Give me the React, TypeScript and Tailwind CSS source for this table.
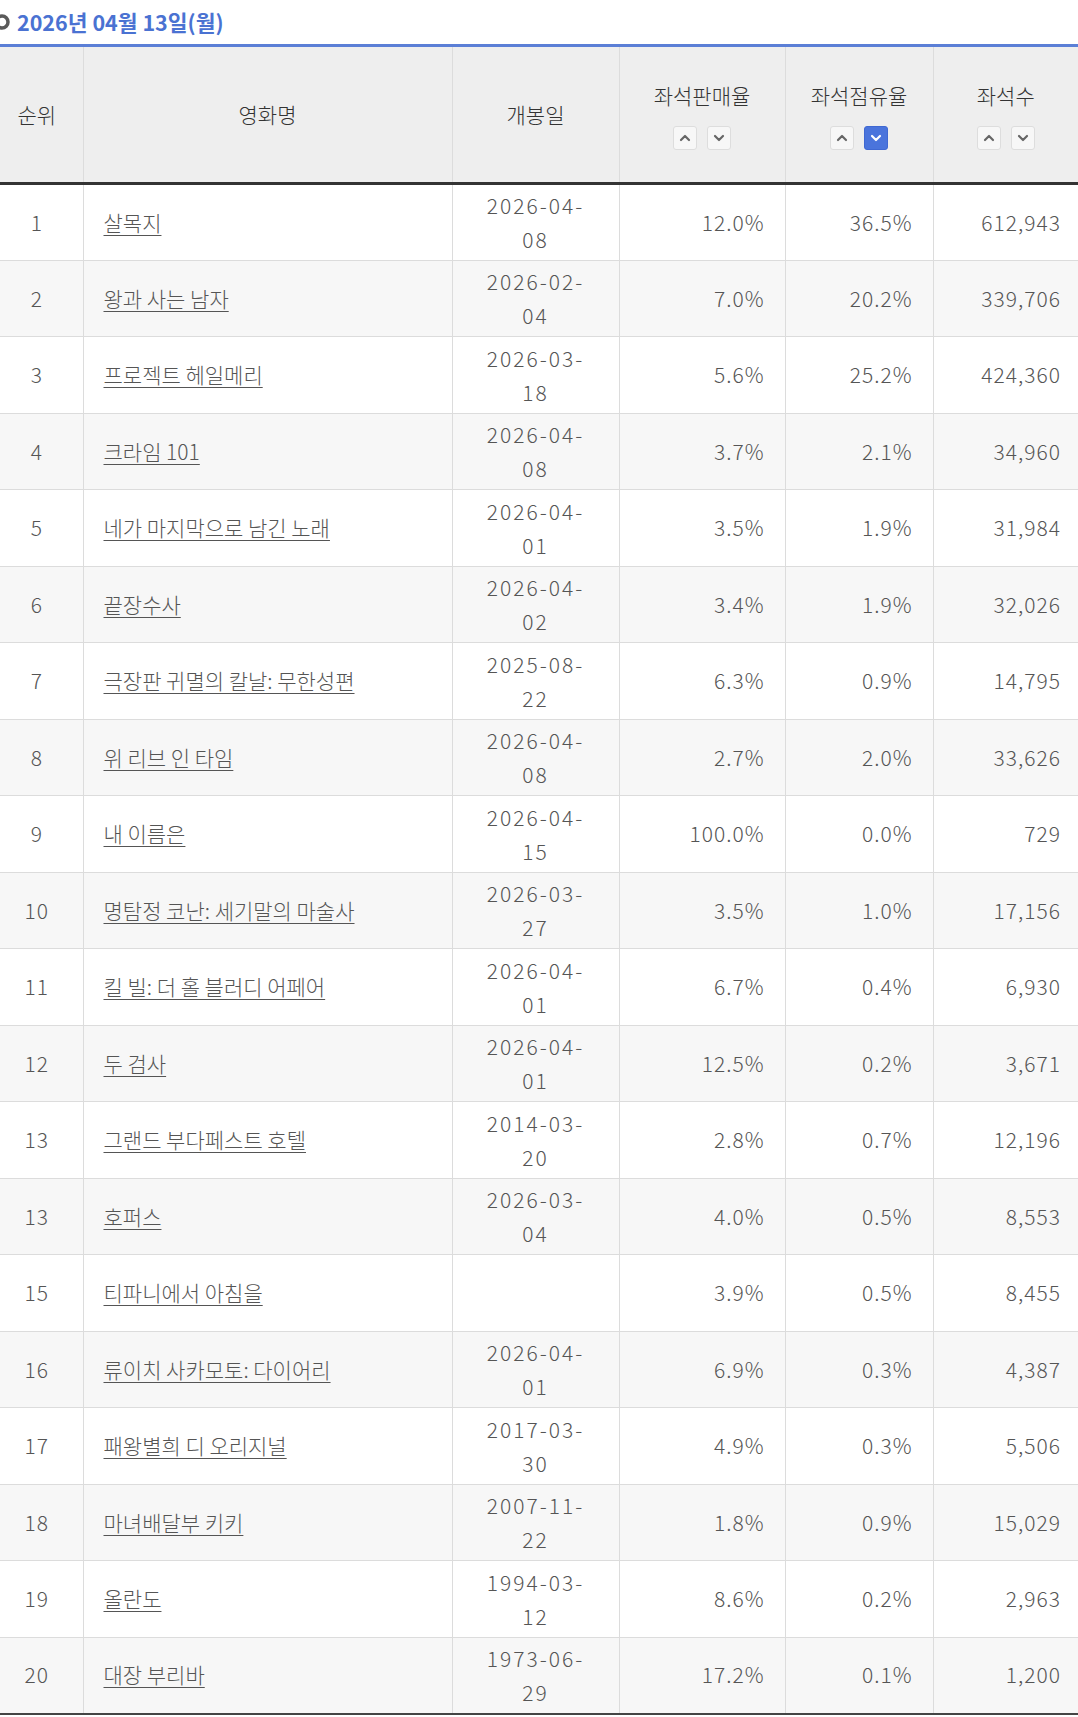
import React from 'react';

const rows = [
  { rank: '1', title: '살목지', date: '2026-04-08', sales: '12.0%', share: '36.5%', seats: '612,943' },
  { rank: '2', title: '왕과 사는 남자', date: '2026-02-04', sales: '7.0%', share: '20.2%', seats: '339,706' },
  { rank: '3', title: '프로젝트 헤일메리', date: '2026-03-18', sales: '5.6%', share: '25.2%', seats: '424,360' },
  { rank: '4', title: '크라임 101', date: '2026-04-08', sales: '3.7%', share: '2.1%', seats: '34,960' },
  { rank: '5', title: '네가 마지막으로 남긴 노래', date: '2026-04-01', sales: '3.5%', share: '1.9%', seats: '31,984' },
  { rank: '6', title: '끝장수사', date: '2026-04-02', sales: '3.4%', share: '1.9%', seats: '32,026' },
  { rank: '7', title: '극장판 귀멸의 칼날: 무한성편', date: '2025-08-22', sales: '6.3%', share: '0.9%', seats: '14,795' },
  { rank: '8', title: '위 리브 인 타임', date: '2026-04-08', sales: '2.7%', share: '2.0%', seats: '33,626' },
  { rank: '9', title: '내 이름은', date: '2026-04-15', sales: '100.0%', share: '0.0%', seats: '729' },
  { rank: '10', title: '명탐정 코난: 세기말의 마술사', date: '2026-03-27', sales: '3.5%', share: '1.0%', seats: '17,156' },
  { rank: '11', title: '킬 빌: 더 홀 블러디 어페어', date: '2026-04-01', sales: '6.7%', share: '0.4%', seats: '6,930' },
  { rank: '12', title: '두 검사', date: '2026-04-01', sales: '12.5%', share: '0.2%', seats: '3,671' },
  { rank: '13', title: '그랜드 부다페스트 호텔', date: '2014-03-20', sales: '2.8%', share: '0.7%', seats: '12,196' },
  { rank: '13', title: '호퍼스', date: '2026-03-04', sales: '4.0%', share: '0.5%', seats: '8,553' },
  { rank: '15', title: '티파니에서 아침을', date: '', sales: '3.9%', share: '0.5%', seats: '8,455' },
  { rank: '16', title: '류이치 사카모토: 다이어리', date: '2026-04-01', sales: '6.9%', share: '0.3%', seats: '4,387' },
  { rank: '17', title: '패왕별희 디 오리지널', date: '2017-03-30', sales: '4.9%', share: '0.3%', seats: '5,506' },
  { rank: '18', title: '마녀배달부 키키', date: '2007-11-22', sales: '1.8%', share: '0.9%', seats: '15,029' },
  { rank: '19', title: '올란도', date: '1994-03-12', sales: '8.6%', share: '0.2%', seats: '2,963' },
  { rank: '20', title: '대장 부리바', date: '1973-06-29', sales: '17.2%', share: '0.1%', seats: '1,200' },
];

const Chevron = ({ down, active }: { down?: boolean; active?: boolean }) => (
  <span
    className={
      active
        ? 'flex h-6 w-6 items-center justify-center rounded-[3px] border border-[#3f68d2] bg-[#4a74dc]'
        : 'flex h-6 w-6 items-center justify-center rounded-[3px] border border-[#dddddd] bg-[#f7f7f7]'
    }
  >
    <svg width="12" height="8" viewBox="0 0 12 8" fill="none">
      <path
        d={down ? 'M2 2 L6 6 L10 2' : 'M2 6 L6 2 L10 6'}
        stroke={active ? '#ffffff' : '#666666'}
        strokeWidth="2.2"
        strokeLinecap="round"
        strokeLinejoin="round"
      />
    </svg>
  </span>
);

const SortHead = ({ label, activeDown, last }: { label: string; activeDown?: boolean; last?: boolean }) => (
  <th className={(last ? 'border-l ' : 'border-x ') + 'border-[#dcdcdc] px-0 align-middle font-light'}>
    <div className="flex flex-col items-center gap-[14px] pt-[1px]">
      <span>{label}</span>
      <div className="flex gap-[10px]">
        <Chevron />
        <Chevron down active={activeDown} />
      </div>
    </div>
  </th>
);

const App = () => {
  return (
    <div className="w-[1078px] bg-white font-['Noto_Sans_CJK_KR','Noto_Sans',sans-serif] text-[21px] font-light text-[#555555]">
      <div className="flex h-[44px] items-center gap-[7px]">
        <svg width="10" height="22" viewBox="0 0 10 22" className="shrink-0">
          <circle cx="2" cy="11" r="6" fill="none" stroke="#5a5a5a" strokeWidth="3.5" />
        </svg>
        <span className="text-[21.5px] font-bold leading-none text-[#4a72d2]">2026년 04월 13일(월)</span>
      </div>
      <table className="w-full table-fixed border-collapse border-t-[3px] border-[#5b7fd6]">
        <colgroup>
          <col className="w-[83px]" />
          <col className="w-[369px]" />
          <col className="w-[167px]" />
          <col className="w-[166px]" />
          <col className="w-[148px]" />
          <col className="w-[145px]" />
        </colgroup>
        <thead>
          <tr className="h-[138px] border-b-[3px] border-[#333333] bg-[#eeeeee] text-[#333333]">
            <th className="border-r border-[#dcdcdc] pr-[9px] font-light">순위</th>
            <th className="border-x border-[#dcdcdc] font-light">영화명</th>
            <th className="border-x border-[#dcdcdc] font-light">개봉일</th>
            <SortHead label="좌석판매율" />
            <SortHead label="좌석점유율" activeDown />
            <SortHead label="좌석수" last />
          </tr>
        </thead>
        <tbody>
          {rows.map((r, i) => (
            <tr
              key={i}
              className={
                (i % 2 === 1 ? 'bg-[#f7f7f7] ' : 'bg-white ') +
                (i === rows.length - 1 ? 'border-b-2 border-[#444444]' : 'border-b border-[#dcdcdc]')
              }
            >
              <td className="h-[76.5px] border-r border-[#dcdcdc] pr-[9px] text-center tracking-[1px]">{r.rank}</td>
              <td className="border-x border-[#dcdcdc] pl-5">
                <a href="#" className="underline decoration-1 underline-offset-[4px]">
                  {r.title}
                </a>
              </td>
              <td className="border-x border-[#dcdcdc] text-center leading-[34px] tracking-[2px]">
                {r.date && (
                  <>
                    {r.date.slice(0, 8)}
                    <br />
                    {r.date.slice(8)}
                  </>
                )}
              </td>
              <td className="border-x border-[#dcdcdc] pr-5 text-right tracking-[1px]">{r.sales}</td>
              <td className="border-x border-[#dcdcdc] pr-5 text-right tracking-[1px]">{r.share}</td>
              <td className="border-l border-[#dcdcdc] pr-[17px] text-right tracking-[1px]">{r.seats}</td>
            </tr>
          ))}
        </tbody>
      </table>
    </div>
  );
};

export default App;
